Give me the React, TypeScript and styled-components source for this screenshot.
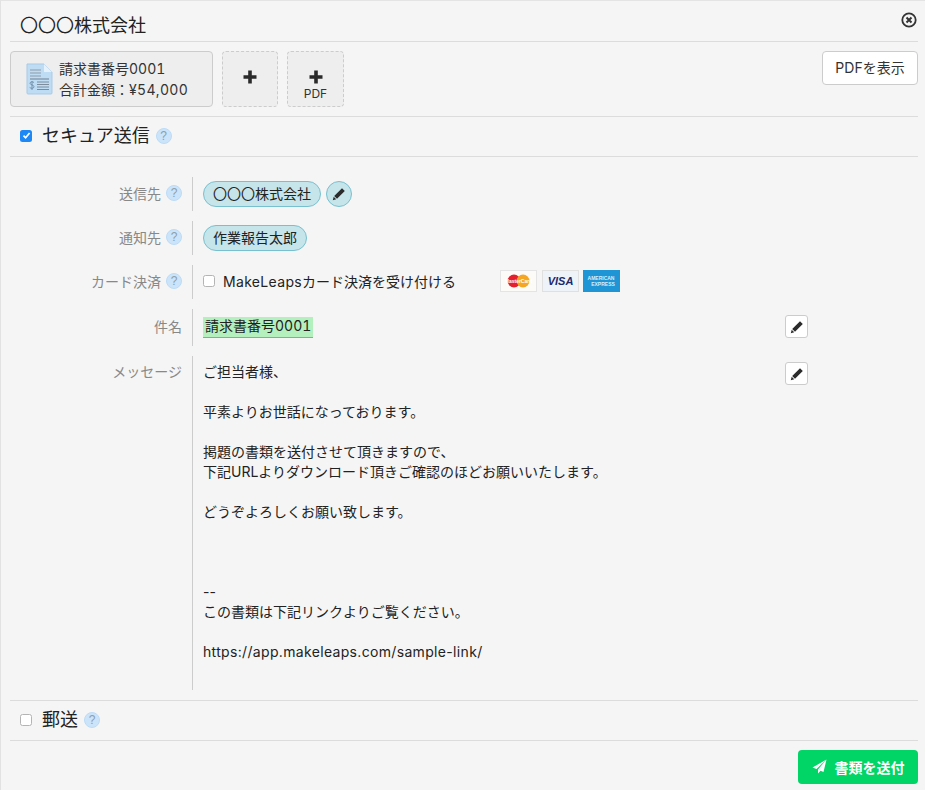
import React from "react";
import styled, { createGlobalStyle } from "styled-components";

const Global = createGlobalStyle`
  html, body { margin: 0; padding: 0; background: #f5f5f5; }
  body { font-family: Inter, "Noto Sans CJK JP", "Noto Sans", sans-serif; color: #222; }
`;
const Page = styled.div`
  width: 925px; height: 790px; box-sizing: border-box; overflow: hidden; position: relative;
  background: #f5f5f5; border-left: 1px solid #e2e2e2; border-top: 1px solid #e4e4e4;
  padding: 0 7px 0 9px;
`;
const Header = styled.div`
  height: 41px; box-sizing: border-box; display: flex; align-items: center; padding: 6px 0 0 10px;
  border-bottom: 1px solid #dcdcdc; font-size: 18px; color: #222;
`;
const Close = styled.svg`position: absolute; top: 11px; right: 8px; width: 16px; height: 16px;`;
const AttachRow = styled.div`
  height: 75px; box-sizing: border-box; display: flex; align-items: flex-start; gap: 9px; padding-top: 9px;
  border-bottom: 1px solid #dcdcdc;
`;
const DocCard = styled.div`
  width: 203px; height: 56px; box-sizing: border-box; border: 1px solid #ccc; border-radius: 4px; background: #eee;
  display: flex; align-items: center; padding-left: 15px; gap: 6px; font-size: 14px; line-height: 21px; color: #333;
`;
const DocText = styled.div`display: flex; flex-direction: column; padding-bottom: 1px; font-variant-numeric: tabular-nums;`;
const AddBox = styled.div<{ $w: number }>`
  width: ${p => p.$w}px; height: 56px; box-sizing: border-box; border: 1px dashed #ccc; border-radius: 4px; background: #eee;
  display: flex; flex-direction: column; align-items: center; justify-content: flex-start; padding-top: 18px; color: #333; font-size: 12px; line-height: 14px;
`;
const AddPlus = styled.svg`width: 14px; height: 14px; display: block; flex: none;`;
const PdfLabel = styled.span`margin-top: 3px;`;
const ViewPdf = styled.div`
  margin-left: auto; width: 96px; height: 34px; box-sizing: border-box; background: #fff; border: 1px solid #ccc; border-radius: 4px; padding-bottom: 3px;
  display: flex; align-items: center; justify-content: center; font-size: 14px; color: #333;
`;
const Section = styled.div<{ $h: number }>`
  height: ${p => p.$h}px; box-sizing: border-box; display: flex; align-items: center; padding: 0 0 2px 10px;
  border-bottom: 1px solid #dcdcdc; font-size: 18px; color: #222;
`;
const Check = styled.span<{ $on?: boolean }>`
  width: 12px; height: 12px; box-sizing: border-box; border-radius: 2.5px; flex: none; display: inline-flex; align-items: center; justify-content: center;
  background: ${p => (p.$on ? "#1e88f5" : "#fff")}; border: ${p => (p.$on ? "none" : "1px solid #b4b4b4")};
`;
const SectionLabel = styled.span`margin-left: 10px; margin-right: 1px; padding-bottom: 3px;`;
const Help = styled.span`
  width: 16px; height: 16px; box-sizing: border-box; border-radius: 50%; background: #cce4f9; border: 1px solid #bcdcf6; color: #8a9fb2;
  font-family: "Liberation Sans", sans-serif; font-size: 12px; display: inline-flex; align-items: center; justify-content: center; margin-left: 5px; flex: none;
`;
const Form = styled.div`display: flex; flex-direction: column; gap: 10px; padding-top: 20px; height: 544px; box-sizing: border-box; border-bottom: 1px solid #dcdcdc;`;
const Row = styled.div<{ $h: number }>`display: flex; height: ${p => p.$h}px; position: relative;`;
const Label = styled.div<{ $top?: boolean }>`
  width: 182px; flex: none; display: flex; justify-content: flex-end; box-sizing: border-box;
  padding: ${p => (p.$top ? "5px 10px 0 0" : "0 10px 3px 0")};
  align-items: ${p => (p.$top ? "flex-start" : "center")}; font-size: 14px; color: #888;
`;
const Value = styled.div<{ $lift?: number }>`
  flex: 1; border-left: 1px solid #ccc; padding: 0 0 ${p => p.$lift ?? 0}px 10px; display: flex; align-items: center; font-size: 14px; color: #222; min-width: 0;
`;
const Chip = styled.span`
  height: 26px; box-sizing: border-box; padding: 0 9px 2px; border-radius: 13px; background: #c6e5ea; border: 1px solid #78c0cf;
  display: inline-flex; align-items: center; font-size: 14px; color: #222;
`;
const ChipEdit = styled.span`
  width: 26px; height: 26px; box-sizing: border-box; border-radius: 50%; background: #c6e5ea; border: 1px solid #78c0cf;
  display: inline-flex; align-items: center; justify-content: center; margin-left: 5px;
`;
const Pencil = styled.svg`width: 14px; height: 14px; display: block;`;
const EditBtn = styled.span<{ $top: number }>`
  position: absolute; left: 775px; top: ${p => p.$top}px; width: 23px; height: 23px; box-sizing: border-box; background: #fff; border: 1px solid #ccc; border-radius: 3px;
  display: flex; align-items: center; justify-content: center;
`;
const CardText = styled.span`margin-left: 8px; font-size: 14px; width: 277px; padding-bottom: 1px;`;
const Latin = styled.span`letter-spacing: 0.33px;`;
const CardLogo = styled.svg`width: 37px; height: 22px; margin-right: 4.5px; display: block; flex: none;`;
const Highlight = styled.span`
  background: #b4f0be; border-bottom: 1px solid #3cd873; height: 21px; line-height: 18px; padding: 0 2px; font-size: 14px; box-sizing: border-box; display: inline-block; font-variant-numeric: tabular-nums;
`;
const Message = styled.div`
  flex: 1; border-left: 1px solid #ccc; padding: 6px 0 0 10px; font-size: 14px; line-height: 20px; white-space: pre; color: #222;
`;
const Footer = styled.div`display: flex; justify-content: flex-end; padding-top: 9px;`;
const Send = styled.div`
  width: 120px; height: 34px; background: #00d566; border-radius: 4px; color: #fff; font-size: 14px; font-weight: 700; padding-bottom: 1px;
  display: flex; align-items: center; justify-content: center; gap: 8px; box-sizing: border-box;
`;
const Plane = styled.svg`width: 15px; height: 15px; display: block;`;

const PencilIcon = () => (
  <Pencil viewBox="0 0 14 14"><path d="M10 1.200 L12.800 4 L5 11.800 L2.200 9 Z M1.700 9.800 L4.200 12.300 L0.800 13.200 Z" fill="#2b2b2b" /></Pencil>
);
const Plus = () => (
  <AddPlus viewBox="0 0 14 14"><path d="M5.200 0.500h3.600v4.700h4.700v3.600H8.800v4.700H5.200V8.800H0.500V5.200h4.700z" fill="#2a2a2a" /></AddPlus>
);
const Tick = () => (
  <svg width="9" height="9" viewBox="0 0 9 9"><path d="M1.500 4.600 L3.600 6.800 L7.600 2" fill="none" stroke="#fff" strokeWidth="1.700" /></svg>
);
const DocIcon = () => (
  <svg width="27" height="32" viewBox="0 0 27 32">
    <path d="M1 1h17l8 8v21a1 1 0 0 1-1 1H2a1 1 0 0 1-1-1z" fill="#bfdcf5" stroke="#a9c9e6" />
    <path d="M18 1l8 8h-8z" fill="#e6f2fb" />
    <path d="M4 7h11M4 10h11M4 13h11" stroke="#8d9aa6" strokeWidth="1" />
    <path d="M4 16h19" stroke="#6f7f8f" strokeWidth="1" />
    <path d="M11 19h12M11 21.500h12M11 24h12M11 26.500h12" stroke="#7c8c9c" strokeWidth="1" />
    <path d="M8 19.500c-1-1-4-1-4 .8s4 1.400 4 3.400-3 2-4.300 .8M6 18v9" fill="none" stroke="#6d8ba6" strokeWidth=".9" />
  </svg>
);

export default function App() {
  return (
    <Page>
      <Global />
      <Header>〇〇〇株式会社</Header>
      <Close viewBox="0 0 16 16">
        <circle cx="8" cy="8" r="6.700" fill="none" stroke="#333" strokeWidth="1.800" />
        <path d="M5.500 5.500l5 5M10.500 5.500l-5 5" stroke="#333" strokeWidth="2" />
      </Close>
      <AttachRow>
        <DocCard>
          <DocIcon />
          <DocText>
            <span>請求書番号0001</span>
            <span>合計金額：<Latin>¥54,000</Latin></span>
          </DocText>
        </DocCard>
        <AddBox $w={56}><Plus /></AddBox>
        <AddBox $w={57}><Plus /><PdfLabel>PDF</PdfLabel></AddBox>
        <ViewPdf>PDFを表示</ViewPdf>
      </AttachRow>
      <Section $h={40}>
        <Check $on><Tick /></Check>
        <SectionLabel>セキュア送信</SectionLabel>
        <Help>?</Help>
      </Section>
      <Form>
        <Row $h={34}>
          <Label>送信先<Help>?</Help></Label>
          <Value><Chip>〇〇〇株式会社</Chip><ChipEdit><PencilIcon /></ChipEdit></Value>
        </Row>
        <Row $h={34}>
          <Label>通知先<Help>?</Help></Label>
          <Value><Chip>作業報告太郎</Chip></Value>
        </Row>
        <Row $h={34}>
          <Label>カード決済<Help>?</Help></Label>
          <Value $lift={2}>
            <Check />
            <CardText><Latin>MakeLeaps</Latin>カード決済を受け付ける</CardText>
            <CardLogo viewBox="0 0 37 22">
              <rect x=".5" y=".5" width="36" height="21" fill="#fdfbf7" stroke="#e4e4e4" />
              <circle cx="14" cy="11" r="6.500" fill="#e5202e" />
              <circle cx="23" cy="11" r="6.500" fill="#f5a623" />
              <text x="18.500" y="12.800" textAnchor="middle" fontSize="5" fontWeight="700" fill="#fff" fontFamily="Liberation Sans">MasterCard</text>
            </CardLogo>
            <CardLogo viewBox="0 0 37 22">
              <rect x=".5" y=".5" width="36" height="21" fill="#eef3fa" stroke="#e0e0e0" />
              <text x="18.500" y="15" textAnchor="middle" fontSize="11" fontWeight="700" fontStyle="italic" fill="#1a2a6c" fontFamily="Liberation Sans">VISA</text>
            </CardLogo>
            <CardLogo viewBox="0 0 37 22">
              <rect width="37" height="22" fill="#1f95d6" />
              <text x="18" y="10" textAnchor="middle" fontSize="5" fontWeight="700" fill="#d8eefa" fontFamily="Liberation Sans">AMERICAN</text>
              <text x="20" y="16" textAnchor="middle" fontSize="5" fontWeight="700" fill="#d8eefa" fontFamily="Liberation Sans">EXPRESS</text>
            </CardLogo>
          </Value>
        </Row>
        <Row $h={37}>
          <Label>件名</Label>
          <Value><Highlight>請求書番号0001</Highlight></Value>
          <EditBtn $top={6}><PencilIcon /></EditBtn>
        </Row>
        <Row $h={334}>
          <Label $top>メッセージ</Label>
          <Message>{`ご担当者様、

平素よりお世話になっております。

掲題の書類を送付させて頂きますので、
下記URLよりダウンロード頂きご確認のほどお願いいたします。

どうぞよろしくお願い致します。



--
この書類は下記リンクよりご覧ください。

`}<Latin>https://app.makeleaps.com/sample-link/</Latin></Message>
          <EditBtn $top={6}><PencilIcon /></EditBtn>
        </Row>
      </Form>
      <Section $h={40}>
        <Check />
        <SectionLabel>郵送</SectionLabel>
        <Help>?</Help>
      </Section>
      <Footer>
        <Send>
          <Plane viewBox="0 0 15 15"><path d="M14.500 .5 L.5 8.500 L4.500 10 Z M14.500 .5 L6 10.500 L6 14.500 L8.500 11.800 L11.500 13 Z" fill="#fff" /></Plane>
          書類を送付
        </Send>
      </Footer>
    </Page>
  );
}
